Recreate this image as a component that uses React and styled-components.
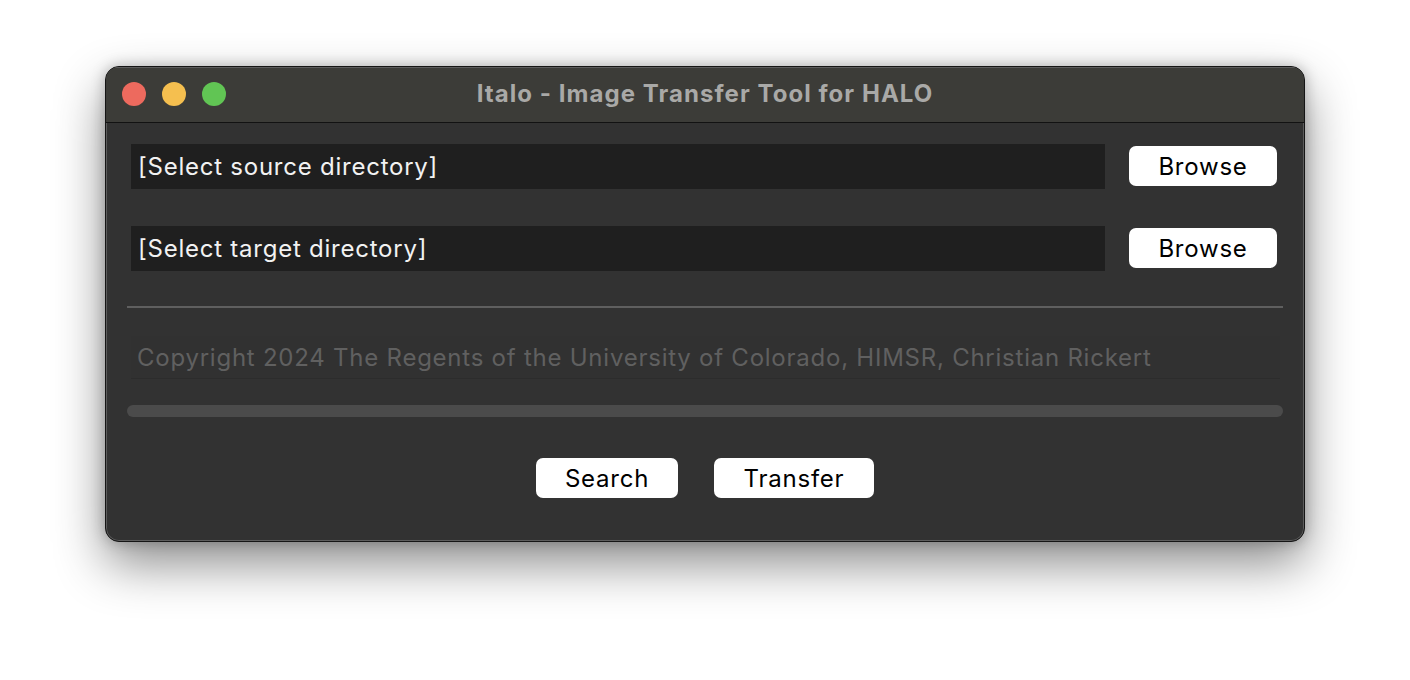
import React from "react";
import styled, { createGlobalStyle } from "styled-components";

const GlobalStyle = createGlobalStyle`
  html, body {
    margin: 0;
    padding: 0;
    background: #ffffff;
  }
  body {
    font-family: "Inter", "Liberation Sans", sans-serif;
  }
`;

const Page = styled.div`
  width: 1410px;
  height: 680px;
  padding: 66px 0 0 105px;
  box-sizing: border-box;
`;

const Window = styled.div`
  width: 1200px;
  height: 476px;
  box-sizing: border-box;
  border-radius: 14px;
  background: #323232;
  border: 1px solid #151515;
  box-shadow: inset 0 0 0 1px #5c5c5c, 0 22px 50px rgba(0, 0, 0, 0.45),
    0 0 14px rgba(0, 0, 0, 0.25);
  overflow: hidden;
  display: flex;
  flex-direction: column;
`;

const TitleBar = styled.div`
  position: relative;
  height: 55px;
  flex-shrink: 0;
  background: #3c3c38;
  border-bottom: 1px solid #121212;
  box-shadow: inset 0 1px 0 #5c5c5c;
  display: flex;
  align-items: center;
  justify-content: center;
`;

const Lights = styled.div`
  position: absolute;
  left: 16px;
  top: 15px;
  display: flex;
  gap: 16px;
`;

const Light = styled.span`
  width: 24px;
  height: 24px;
  border-radius: 50%;
  background: ${(p) => p.color};
`;

const Title = styled.div`
  font-size: 24px;
  font-weight: 700;
  color: #a9a9a7;
  letter-spacing: 1.05px;
  margin-bottom: 3px;
`;

const Body = styled.div`
  display: flex;
  flex-direction: column;
  padding: 21px 27px 0 21px;
  letter-spacing: 0.76px;
`;

const Row = styled.div`
  display: flex;
  align-items: center;
  gap: 24px;
  padding-left: 4px;
  margin-bottom: ${(p) => p.mb || 0}px;
`;

const PathField = styled.div`
  flex: 1;
  height: 45px;
  background: #1f1f1f;
  color: #f2f2f2;
  font-size: 24px;
  display: flex;
  align-items: center;
  padding-left: 7px;
`;

const Button = styled.button`
  width: ${(p) => p.w}px;
  height: 40px;
  border: none;
  border-radius: 7px;
  background: #ffffff;
  color: #000000;
  font-family: inherit;
  font-size: 24px;
  letter-spacing: inherit;
  padding: 0;
  margin-bottom: 1px;
  display: flex;
  align-items: center;
  justify-content: center;
`;

const Separator = styled.div`
  height: 2px;
  background: #5f5f5f;
  margin: 35px 0 28px;
  margin-right: -6px;
`;

const Copyright = styled.div`
  height: 42px;
  margin: 0 -3px 0 4px;
  border-bottom: 1px solid #2c2c2c;
  background: #313131;
  color: #606060;
  font-size: 24px;
  display: flex;
  align-items: center;
  padding-left: 6px;
`;

const Progress = styled.div`
  height: 12px;
  border-radius: 6px;
  background: #4b4b4b;
  margin: 26px -6px 0 0;
`;

const Actions = styled.div`
  display: flex;
  justify-content: center;
  gap: 36px;
  margin-top: 41px;
  padding-left: 6px;
`;

export default function App() {
  return (
    <>
      <GlobalStyle />
      <Page>
        <Window>
          <TitleBar>
            <Lights>
              <Light color="#ed6a5e" />
              <Light color="#f5bf4f" />
              <Light color="#61c554" />
            </Lights>
            <Title>Italo - Image Transfer Tool for HALO</Title>
          </TitleBar>
          <Body>
            <Row mb={37}>
              <PathField>[Select source directory]</PathField>
              <Button w={148}>Browse</Button>
            </Row>
            <Row>
              <PathField>[Select target directory]</PathField>
              <Button w={148}>Browse</Button>
            </Row>
            <Separator />
            <Copyright>
              Copyright 2024 The Regents of the University of Colorado, HIMSR,
              Christian Rickert
            </Copyright>
            <Progress />
            <Actions>
              <Button w={142}>Search</Button>
              <Button w={160}>Transfer</Button>
            </Actions>
          </Body>
        </Window>
      </Page>
    </>
  );
}
